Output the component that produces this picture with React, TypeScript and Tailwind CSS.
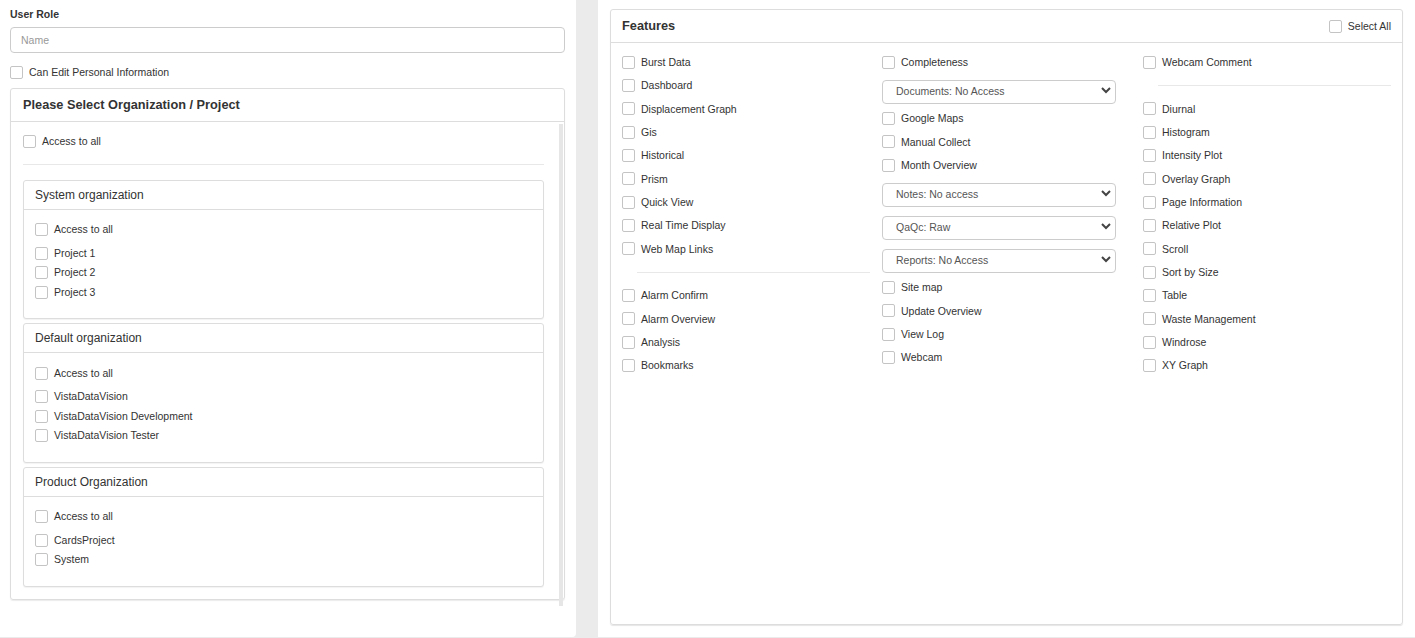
import { ReactNode } from "react";

type Item = string | { select: string } | "---";

const col1: Item[] = [
  "Burst Data",
  "Dashboard",
  "Displacement Graph",
  "Gis",
  "Historical",
  "Prism",
  "Quick View",
  "Real Time Display",
  "Web Map Links",
  "---",
  "Alarm Confirm",
  "Alarm Overview",
  "Analysis",
  "Bookmarks",
];

const col2: Item[] = [
  "Completeness",
  { select: "Documents: No Access" },
  "Google Maps",
  "Manual Collect",
  "Month Overview",
  { select: "Notes: No access" },
  { select: "QaQc: Raw" },
  { select: "Reports: No Access" },
  "Site map",
  "Update Overview",
  "View Log",
  "Webcam",
];

const col3: Item[] = [
  "Webcam Comment",
  "---",
  "Diurnal",
  "Histogram",
  "Intensity Plot",
  "Overlay Graph",
  "Page Information",
  "Relative Plot",
  "Scroll",
  "Sort by Size",
  "Table",
  "Waste Management",
  "Windrose",
  "XY Graph",
];

const orgs = [
  { name: "System organization", projects: ["Project 1", "Project 2", "Project 3"] },
  {
    name: "Default organization",
    projects: ["VistaDataVision", "VistaDataVision Development", "VistaDataVision Tester"],
  },
  { name: "Product Organization", projects: ["CardsProject", "System"] },
];

function Box() {
  return (
    <input
      type="checkbox"
      className="appearance-none shrink-0 w-[13px] h-[13px] border border-[#c4c4c4] rounded-[2px] bg-white m-0"
    />
  );
}

function Check({ label, className = "h-[23.33px]" }: { label: string; className?: string }) {
  return (
    <label className={`flex items-center gap-[6px] ${className}`}>
      <Box />
      <span className="text-[10.5px] text-[#333] leading-none">{label}</span>
    </label>
  );
}

function Select({ label }: { label: string }) {
  return (
    <div className="relative w-[234px] h-[24px] mt-[4.5px] mb-[4.5px]">
      <select className="appearance-none w-full h-full border border-[#ccc] rounded-[4px] bg-white pl-[13px] text-[10.5px] text-[#555] outline-none">
        <option>{label}</option>
      </select>
      <svg
        className="absolute right-[5px] top-[9px] pointer-events-none"
        width="10"
        height="7"
        viewBox="0 0 10 7"
      >
        <polyline points="1,1 5,5 9,1" fill="none" stroke="#444" strokeWidth="2" />
      </svg>
    </div>
  );
}

function Column({ items }: { items: Item[] }) {
  return (
    <div className="flex flex-col">
      {items.map((it, i) => {
        if (it === "---")
          return (
            <div key={i} className="h-[23.5px] flex items-center">
              <div className="ml-[15px] w-[233px] border-t border-[#e8e8e8]" />
            </div>
          );
        if (typeof it === "string") return <Check key={i} label={it} />;
        return <Select key={i} label={it.select} />;
      })}
    </div>
  );
}

function Card({ title, children }: { title: string; children: ReactNode }) {
  return (
    <div className="border border-[#ddd] rounded-[3px] bg-white shadow-[0_1px_1px_rgba(0,0,0,0.05)]">
      <div className="h-[29px] flex items-center px-[11px] border-b border-[#ddd] text-[12px] text-[#333]">
        {title}
      </div>
      {children}
    </div>
  );
}

export default function App() {
  return (
    <div className="flex h-[638px] w-[1415px] bg-[#ebebeb] font-['Liberation_Sans',Arial,sans-serif]">
      {/* left: user role + organizations */}
      <div className="w-[576px] h-[637px] bg-white rounded-br-[4px] pl-[10px] pr-[11px] pt-[8px]">
        <div className="h-[14px] flex items-center text-[10.5px] font-bold text-[#333]">User Role</div>
        <input
          placeholder="Name"
          className="mt-[5px] w-full h-[26px] border border-[#ccc] rounded-[4px] px-[10px] text-[10.5px] text-[#555] placeholder:text-[#999] outline-none"
        />
        <div className="mt-[12px]">
          <Check label="Can Edit Personal Information" className="h-[14px]" />
        </div>

        <div className="mt-[9px] h-[512px] border border-[#ddd] rounded-[3px] shadow-[0_1px_1px_rgba(0,0,0,0.08)] flex flex-col">
          <div className="h-[33px] shrink-0 flex items-center px-[12px] border-b border-[#ddd] text-[12.75px] font-bold text-[#333]">
            Please Select Organization / Project
          </div>
          <div className="relative flex-1 pl-[12px] pr-[20px] pt-[7.5px]">
            <Check label="Access to all" />
            <div className="h-[23px] flex items-center">
              <div className="w-full border-t border-[#e8e8e8]" />
            </div>
            <div className="mt-[4px] flex flex-col gap-[4px]">
              {orgs.map((o) => (
                <Card key={o.name} title={o.name}>
                  <div className="px-[11px] pt-[10px] pb-[16.5px]">
                    <Check label="Access to all" className="h-[19.5px]" />
                    <div className="mt-[4px]">
                      {o.projects.map((p) => (
                        <Check key={p} label={p} className="h-[19.5px]" />
                      ))}
                    </div>
                  </div>
                </Card>
              ))}
            </div>
            <div className="absolute right-[1px] top-[2px] -bottom-[7px] w-[4px] bg-[#e6e6e6]" />
          </div>
        </div>
      </div>

      {/* right: features */}
      <div className="ml-[22px] flex-1 h-[637px] bg-white px-[12px] pt-[9px]">
        <div className="h-[616px] border border-[#ddd] rounded-[3px] shadow-[0_1px_1px_rgba(0,0,0,0.1)]">
          <div className="h-[33px] flex items-center justify-between pl-[11px] pr-[11px] border-b border-[#ddd]">
            <span className="text-[12.75px] font-bold text-[#333]">Features</span>
            <Check label="Select All" className="h-[14px]" />
          </div>
          <div className="grid grid-cols-[260px_261px_1fr] pl-[11px] pr-[11px] pt-[7.5px]">
            <Column items={col1} />
            <Column items={col2} />
            <Column items={col3} />
          </div>
        </div>
      </div>
    </div>
  );
}
